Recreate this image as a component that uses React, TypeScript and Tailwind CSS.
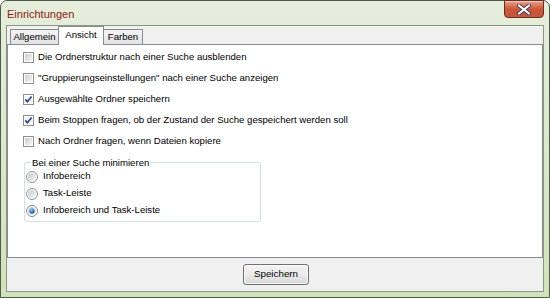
import React from "react";

const font = "font-['Liberation_Sans',Arial,sans-serif]";

const CheckBox: React.FC<{ checked?: boolean }> = ({ checked }) => (
  <svg width="11" height="11" viewBox="0 0 11 11" className="shrink-0">
    <defs>
      <linearGradient id="cbg" x1="0" y1="0" x2="1" y2="1">
        <stop offset="0" stopColor="#c9ccd1" />
        <stop offset="1" stopColor="#f7f7f7" />
      </linearGradient>
    </defs>
    <rect x="0.5" y="0.5" width="10" height="10" fill="#ffffff" stroke="#8e8f8f" />
    <rect x="2" y="2" width="7" height="7" fill={checked ? "#f4f5f7" : "url(#cbg)"} />
    {checked && (
      <path d="M2.3 5.4 L4.4 7.8 L8.6 2.6" fill="none" stroke="#2b3f8c" strokeWidth="1.6" />
    )}
  </svg>
);

const Radio: React.FC<{ checked?: boolean }> = ({ checked }) => (
  <svg width="12" height="12" viewBox="0 0 12 12" className="shrink-0">
    <defs>
      <linearGradient id="rbg" x1="0" y1="0" x2="1" y2="1">
        <stop offset="0" stopColor="#c6c9cf" />
        <stop offset="1" stopColor="#f6f6f6" />
      </linearGradient>
      <radialGradient id="rdot" cx="0.4" cy="0.35" r="0.7">
        <stop offset="0" stopColor="#8ad0ff" />
        <stop offset="0.6" stopColor="#2c7cc4" />
        <stop offset="1" stopColor="#143a6a" />
      </radialGradient>
    </defs>
    <circle cx="6" cy="6" r="5.5" fill="#ffffff" stroke="#8e8f8f" />
    <circle cx="6" cy="6" r="4" fill="url(#rbg)" />
    {checked && <circle cx="6" cy="6" r="2.6" fill="url(#rdot)" />}
  </svg>
);

const checks = [
  { label: "Die Ordnerstruktur nach einer Suche ausblenden", checked: false },
  { label: "\"Gruppierungseinstellungen\" nach einer Suche anzeigen", checked: false },
  { label: "Ausgewählte Ordner speichern", checked: true },
  { label: "Beim Stoppen fragen, ob der Zustand der Suche gespeichert werden soll", checked: true },
  { label: "Nach Ordner fragen, wenn Dateien kopiere", checked: false },
];

const radios = [
  { label: "Infobereich", checked: false },
  { label: "Task-Leiste", checked: false },
  { label: "Infobereich und Task-Leiste", checked: true },
];

const App: React.FC = () => {
  return (
    <div
      className={`w-[550px] h-[298px] flex flex-col rounded-t-[7px] border border-[#4f5c4b] bg-linear-to-b from-[#e5eedb] via-[#dbe8cc] to-[#d2e3ba] ${font} text-[9.6px] text-black`}
    >
      {/* Title bar */}
      <div className="h-[24px] flex items-start shrink-0">
        <span className="pl-[6px] pt-[5px] text-[11px] text-[#8b1a0e]">Einrichtungen</span>
        <div className="ml-auto mr-[5px] -mt-px w-[40px] h-[18px] rounded-b-[4px] border border-[#6b2a1d] bg-linear-to-b from-[#e7a48c] via-[#cf5536] to-[#c4553a] flex items-center justify-center shadow-[inset_0_1px_0_rgba(255,255,255,0.45)]">
          <svg width="14" height="11" viewBox="0 0 14 11">
            <path d="M2 1.5 L12 9.5 M12 1.5 L2 9.5" stroke="#3d3d5a" strokeWidth="4" strokeLinecap="round" />
            <path d="M2 1.5 L12 9.5 M12 1.5 L2 9.5" stroke="#ffffff" strokeWidth="2.2" strokeLinecap="round" />
          </svg>
        </div>
      </div>

      {/* Client area */}
      <div className="flex-1 mx-[5px] mb-[5px] border border-[#8a9784] bg-[#f0f0f0] flex flex-col">
        {/* Tabs */}
        <div className="h-[19px] flex items-end pl-[3px] shrink-0">
          <div className="w-[49px] h-[16px] border border-b-0 border-[#898c95] bg-linear-to-b from-[#f4f4f4] to-[#e1e1e1] flex items-center justify-center">
            Allgemein
          </div>
          <div className="relative z-10 -ml-px w-[46px] h-[19px] border border-b-0 border-[#898c95] bg-white flex items-center justify-center pb-[2px]">
            Ansicht
          </div>
          <div className="-ml-px w-[40px] h-[16px] border border-b-0 border-[#898c95] bg-linear-to-b from-[#f4f4f4] to-[#e1e1e1] flex items-center justify-center">
            Farben
          </div>
        </div>

        {/* Panel */}
        <div className="-mt-px h-[214px] border border-[#898c95] bg-white pt-[2px] flex flex-col shrink-0">
          {checks.map((c) => (
            <div key={c.label} className="h-[21px] flex items-center pl-[15px] gap-[4px]">
              <CheckBox checked={c.checked} />
              <span>{c.label}</span>
            </div>
          ))}

          <fieldset className="ml-[16px] mt-[4px] w-[237px] border border-[#d5dfe5] rounded-[3px] pl-[1px] pb-[2px]">
            <legend className="ml-[5px] px-[1px] leading-[13px]">Bei einer Suche minimieren</legend>
            <div className="-mt-px flex flex-col">
              {radios.map((r) => (
                <div key={r.label} className="h-[17px] flex items-center gap-[5px]">
                  <Radio checked={r.checked} />
                  <span>{r.label}</span>
                </div>
              ))}
            </div>
          </fieldset>
        </div>

        {/* Button row */}
        <div className="flex-1 flex items-center justify-center pl-[2px]">
          <button className="w-[66px] h-[21px] rounded-[3px] border border-[#707070] bg-linear-to-b from-[#f3f3f3] via-[#ebebeb] to-[#d8d8d8] shadow-[inset_0_0_0_1px_rgba(255,255,255,0.7)] text-[9.8px]">
            Speichern
          </button>
        </div>
      </div>
    </div>
  );
};

export default App;
